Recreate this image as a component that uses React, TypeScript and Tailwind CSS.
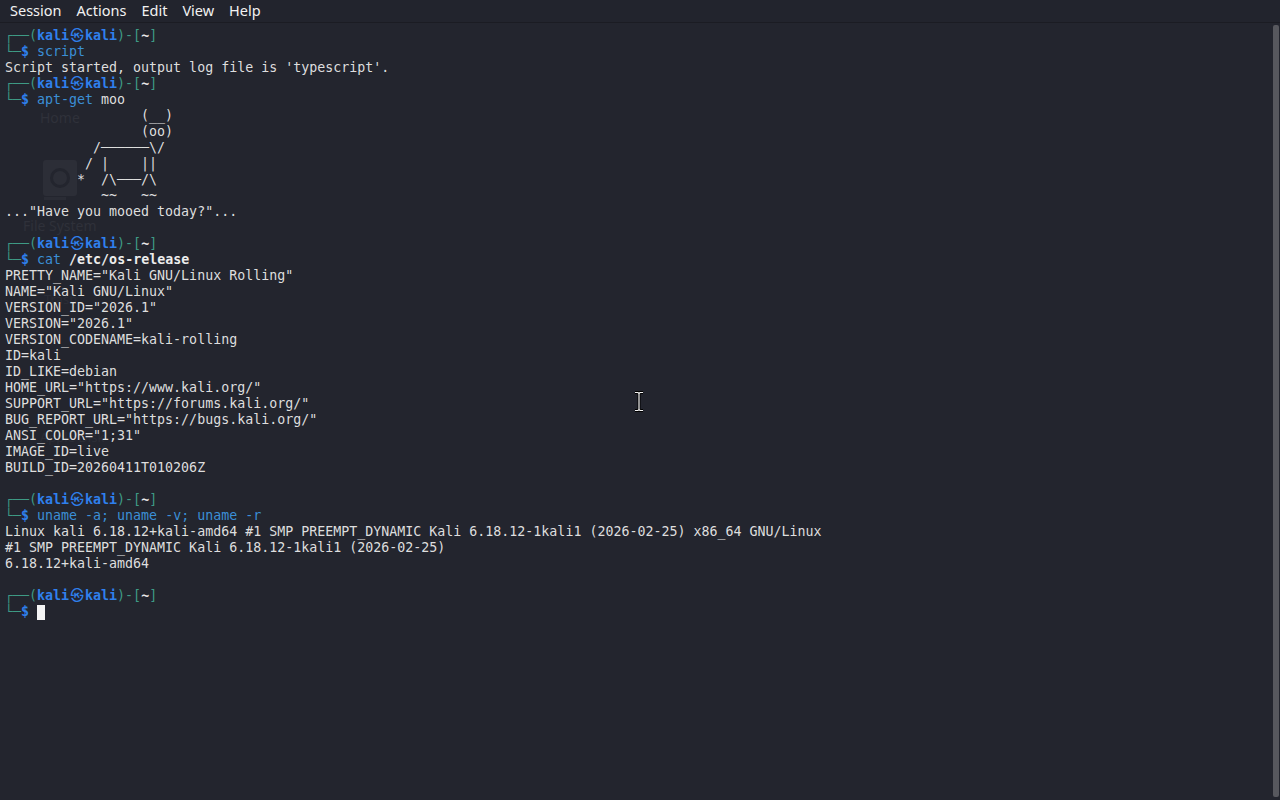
import React from "react";

const mono = "font-['DejaVu_Sans_Mono','Noto_Sans_CJK_JP',monospace]";
const line = "h-[16px] leading-[16px] whitespace-pre";

const Teal: React.FC<{ children: React.ReactNode }> = ({ children }) => (
  <span className="text-[#3e9a85]">{children}</span>
);

const Cmd: React.FC<{ children: React.ReactNode }> = ({ children }) => (
  <span className="text-[#3b8fd6]">{children}</span>
);

const Prompt: React.FC<{ children?: React.ReactNode }> = ({ children }) => (
  <>
    <div className={line}>
      <Teal>┌──(</Teal>
      <span className="font-bold text-[#2f80ed]">kali</span>
      <span className="inline-block w-[16px] text-center font-bold text-[#2f80ed]">㉿</span>
      <span className="font-bold text-[#2f80ed]">kali</span>
      <Teal>)-[</Teal>
      <span className="font-bold text-[#e8e8e8]">~</span>
      <Teal>]</Teal>
    </div>
    <div className={line}>
      <Teal>└─</Teal>
      <span className="font-bold text-[#2f80ed]">$</span> {children}
    </div>
  </>
);

const Out: React.FC<{ children?: React.ReactNode }> = ({ children }) => (
  <div className={line}>{children ?? " "}</div>
);

// faint desktop icons showing through the translucent terminal
const DesktopGhosts: React.FC = () => (
  <div className="pointer-events-none absolute inset-0 font-['Noto_Sans',sans-serif] text-[#2f313a]">
    <div className="absolute left-[40px] top-[84px] text-[14px]">Home</div>
    <div className="absolute left-[43px] top-[137px] flex h-[36px] w-[34px] items-center justify-center rounded-[3px] bg-[#2c2e37]">
      <div className="h-[20px] w-[20px] rounded-full border-[3px] border-[#23252e]" />
    </div>
    <div className="absolute left-[44px] top-[174px] h-[3px] w-[22px] bg-[#2a2c35]" />
    <div className="absolute left-[23px] top-[192px] text-[14px]">File System</div>
    <div className="absolute left-[44px] top-[267px] text-[13px] text-[#2b2d36]">Trash</div>
    <div className="absolute left-[40px] top-[405px] text-[13px] text-[#2b2d36]">Apple Disk</div>
  </div>
);

const IBeam: React.FC = () => (
  <svg
    className="absolute left-[633px] top-[368px]"
    width="12"
    height="21"
    viewBox="0 0 12 21"
  >
    <path
      d="M2 1.5h3l1 1 1-1h3M6 2.5v16M2 19.5h3l1-1 1 1h3"
      fill="none"
      stroke="#000"
      strokeWidth="3"
    />
    <path
      d="M2 1.5h3l1 1 1-1h3M6 2.5v16M2 19.5h3l1-1 1 1h3"
      fill="none"
      stroke="#f4f4f4"
      strokeWidth="1.2"
    />
  </svg>
);

export default function App() {
  return (
    <div className="flex h-[800px] w-[1280px] flex-col overflow-hidden bg-[#23252e]">
      <div className="flex h-[23px] shrink-0 items-center gap-[15px] border-b border-[#1b1c23] bg-[#22242d] pl-[10px] font-['Noto_Sans',sans-serif] text-[14.5px] text-[#f2f2f2]">
        <span>Session</span>
        <span>Actions</span>
        <span>Edit</span>
        <span>View</span>
        <span>Help</span>
      </div>
      <div className="relative flex min-h-0 flex-1">
        <DesktopGhosts />
        <div className={`relative flex-1 pl-[5px] pt-[5px] text-[13.3px] text-[#dedede] ${mono}`}>
          <Prompt>
            <Cmd>script</Cmd>
          </Prompt>
          <Out>Script started, output log file is 'typescript'.</Out>
          <Prompt>
            <Cmd>apt-get</Cmd> moo
          </Prompt>
          <Out>{"                 (__)"}</Out>
          <Out>{"                 (oo)"}</Out>
          <Out>{"           /──────\\/"}</Out>
          <Out>{"          / |    ||"}</Out>
          <Out>{"         *  /\\───/\\"}</Out>
          <Out>{"            ~~   ~~"}</Out>
          <Out>{'..."Have you mooed today?"...'}</Out>
          <Out />
          <Prompt>
            <Cmd>cat</Cmd> <span className="font-bold text-[#ececec]">/etc/os-release</span>
          </Prompt>
          <Out>PRETTY_NAME="Kali GNU/Linux Rolling"</Out>
          <Out>NAME="Kali GNU/Linux"</Out>
          <Out>VERSION_ID="2026.1"</Out>
          <Out>VERSION="2026.1"</Out>
          <Out>VERSION_CODENAME=kali-rolling</Out>
          <Out>ID=kali</Out>
          <Out>ID_LIKE=debian</Out>
          <Out>HOME_URL="https://www.kali.org/"</Out>
          <Out>SUPPORT_URL="https://forums.kali.org/"</Out>
          <Out>BUG_REPORT_URL="https://bugs.kali.org/"</Out>
          <Out>ANSI_COLOR="1;31"</Out>
          <Out>IMAGE_ID=live</Out>
          <Out>BUILD_ID=20260411T010206Z</Out>
          <Out />
          <Prompt>
            <Cmd>uname -a; uname -v; uname -r</Cmd>
          </Prompt>
          <Out>
            Linux kali 6.18.12+kali-amd64 #1 SMP PREEMPT_DYNAMIC Kali 6.18.12-1kali1 (2026-02-25) x86_64 GNU/Linux
          </Out>
          <Out>#1 SMP PREEMPT_DYNAMIC Kali 6.18.12-1kali1 (2026-02-25)</Out>
          <Out>6.18.12+kali-amd64</Out>
          <Out />
          <Prompt>
            <span className="inline-block h-[15px] w-[8px] translate-y-[1px] bg-[#f4f4f4] align-top" />
          </Prompt>
          <IBeam />
        </div>
        <div className="mb-[3px] mr-[1px] mt-[2px] w-[6px] shrink-0 rounded-[2px] bg-[#57585e]" />
      </div>
    </div>
  );
}
